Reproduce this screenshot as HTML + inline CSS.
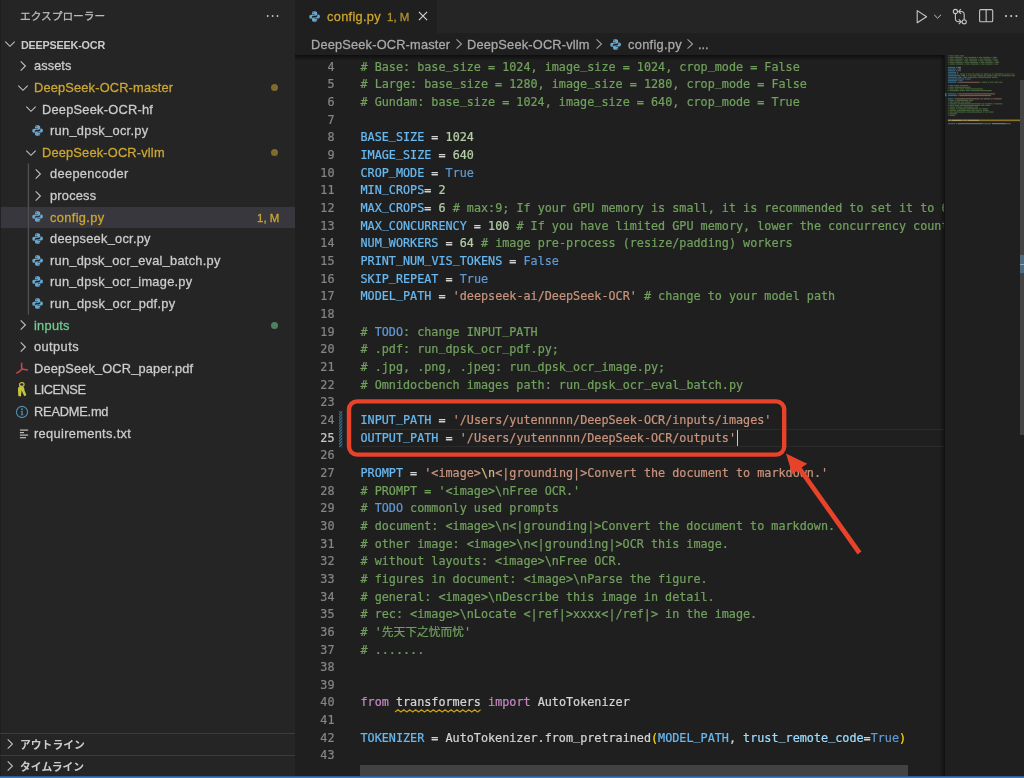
<!DOCTYPE html>
<html lang="ja">
<head>
<meta charset="utf-8">
<title>config.py — DeepSeek-OCR</title>
<style>
html,body{margin:0;padding:0;}
body{width:1024px;height:778px;overflow:hidden;background:#1f1f1f;position:relative;
 font-family:"Liberation Sans","Noto Sans CJK JP",sans-serif;color:#cccccc;}
div,span,svg{box-sizing:border-box;}
.abs{position:absolute;display:block;overflow:visible;}
#side{position:absolute;left:0;top:0;width:295px;height:776px;background:#252526;overflow:hidden;}
#editor{position:absolute;left:295px;top:0;width:729px;height:776px;background:#1f1f1f;overflow:hidden;}
#status{position:absolute;left:0;top:776px;width:1024px;height:2px;background:linear-gradient(#2e6097 0,#2e6097 1px,#3279c8 1px,#3279c8 2px);}
/* sidebar */
.title{position:absolute;left:20.3px;top:5.5px;height:21px;line-height:21px;font-size:10.7px;color:#bbbbbb;white-space:nowrap;}
.hdr{position:absolute;left:20.5px;top:33.5px;height:22px;line-height:22px;font-size:10.8px;font-weight:bold;color:#cccccc;white-space:nowrap;letter-spacing:-0.2px;}
.row,.badge,.title,#tab span,#bc span{-webkit-text-stroke:0.28px currentColor;}
.row,.badge,.title,.hdr,.pane span,#tab span,#bc span{will-change:transform;}
.cl,.ln{-webkit-text-stroke:0.22px currentColor;}
.row{position:absolute;height:21.6px;line-height:21.6px;font-size:12.8px;color:#cccccc;white-space:nowrap;}
.row.warn{color:#cca72f;}
.row.untr{color:#73c991;}
.selrow{position:absolute;left:0;width:295px;height:21.6px;background:#37373d;}
.dot{position:absolute;left:270.7px;width:7.4px;height:7.4px;border-radius:3.7px;}
.badge{position:absolute;right:16px;height:21.6px;line-height:21.6px;font-size:11.5px;color:#cca72f;white-space:nowrap;}
.guide{position:absolute;left:28px;top:163.35px;width:1px;height:151.2px;background:#585858;}
.pane{position:absolute;left:0;width:295px;height:22px;border-top:1px solid #3c3c3c;}
.pane span{position:absolute;left:20.3px;top:0.8px;height:21px;line-height:21px;font-size:10.8px;font-weight:bold;color:#cccccc;white-space:nowrap;}
/* editor */
#tabs{position:absolute;left:0;top:0;width:729px;height:33.4px;background:#252526;}
#tab{position:absolute;left:0;top:0;width:142px;height:33.4px;background:#1f1f1f;}
#tab .name{position:absolute;left:31.9px;top:1px;height:32.6px;line-height:32.6px;font-size:12.8px;color:#cca72f;white-space:nowrap;letter-spacing:0.31px;}
#tab .m{position:absolute;left:91.8px;top:1.4px;height:32.6px;line-height:32.6px;font-size:11.5px;color:#b3942e;white-space:nowrap;}
#bc{position:absolute;left:0;top:33.5px;width:729px;height:21.5px;background:#1f1f1f;font-size:12.8px;color:#a9a9a9;white-space:nowrap;}
#bc span{position:absolute;top:0;height:21.5px;line-height:21.5px;}
#shadow{position:absolute;left:0;top:55px;width:649px;height:5px;background:linear-gradient(rgba(0,0,0,.55),rgba(0,0,0,0));}
.ln{position:absolute;left:0;width:39.5px;text-align:right;height:17.67px;line-height:17.67px;font-family:"DejaVu Sans Mono","Liberation Mono",monospace;font-size:11.78px;color:#858585;white-space:pre;}
.ln.cur{color:#c6c6c6;}
.cl{position:absolute;left:65.5px;height:17.67px;line-height:17.67px;font-family:"DejaVu Sans Mono","Liberation Mono","Noto Sans CJK SC",monospace;font-size:11.78px;color:#d4d4d4;white-space:pre;}
.c{color:#71a05d;} .k{color:#68b9f2;} .n{color:#b5cea8;} .b{color:#6099d4;} .s{color:#c9937c;} .e{color:#d7ba7d;}
.i{color:#c586c0;} .g{color:#ffd700;} .d{color:#d4d4d4;} .p{color:#9cdcfe;}
.w{color:#d4d4d4;}
.u{position:relative;top:-2.1px;}
.u2{position:relative;top:-1px;}
#clip{position:absolute;left:0;top:55px;width:649px;height:721px;overflow:hidden;}
#clipin{will-change:transform;position:absolute;left:0;top:-55px;width:900px;height:776px;}
#curline{position:absolute;left:65px;top:428.9px;width:600px;height:17.7px;border-top:1.3px solid #2b2b2b;border-bottom:1.3px solid #2b2b2b;}
#cursor{position:absolute;left:442.2px;top:429.6px;width:1.3px;height:16.6px;background:#c8c8c8;}
#gut{position:absolute;left:43.7px;top:410.6px;width:3.4px;height:35.3px;background:repeating-linear-gradient(135deg,#2a87ad 0,#2a87ad 1.2px,#1f1f1f 1.2px,#1f1f1f 2.2px);}
#mini{position:absolute;left:649px;top:55px;width:80px;height:721px;background:#1f1f1f;}
#minishadow{position:absolute;left:645px;top:55px;width:5px;height:721px;background:linear-gradient(90deg,rgba(0,0,0,0),rgba(0,0,0,.45));}
#vslider{position:absolute;left:725px;top:80px;width:4px;height:355px;background:#434343;}
#vmark{position:absolute;left:725px;top:255.3px;width:4px;height:17.6px;background:#4d6b80;}
#vmark2{position:absolute;left:725px;top:263.6px;width:4px;height:1px;background:#9aa5ad;}
#hslider{position:absolute;left:65px;top:765.3px;width:548px;height:10.7px;background:#424242;}
</style>
</head>
<body>
<div id="side">
<div class="title">エクスプローラー</div>
<svg class="abs" style="left:265.9px;top:14.3px" width="14" height="4" viewBox="0 0 14 4" fill="#c5c5c5"><circle cx="1.7" cy="2" r="0.95"/><circle cx="6.6" cy="2" r="0.95"/><circle cx="11.5" cy="2" r="0.95"/></svg>
<svg class="abs" style="left:4px;top:38.3px" width="12" height="12" viewBox="0 0 12 12"><path d="M1.3 3.6 L6 8.3 L10.7 3.6" fill="none" stroke="#c0c0c0" stroke-width="1.1"/></svg>
<div class="hdr">DEEPSEEK-OCR</div>
<svg class="abs" style="left:16.70px;top:60.15px" width="12" height="12" viewBox="0 0 12 12"><path d="M3.7 1.3 L8.4 6 L3.7 10.7" fill="none" stroke="#c0c0c0" stroke-width="1.1"/></svg>
<div class="row " style="top:55.35px;left:34.00px;letter-spacing:0.083px">assets</div>
<svg class="abs" style="left:16.90px;top:81.85px" width="12" height="12" viewBox="0 0 12 12"><path d="M1.3 3.6 L6 8.3 L10.7 3.6" fill="none" stroke="#c0c0c0" stroke-width="1.1"/></svg>
<div class="row warn" style="top:76.95px;left:34.00px;letter-spacing:0.179px">DeepSeek-OCR-master</div>
<div class="dot" style="top:83.95px;background:#7f6c2b"></div>
<svg class="abs" style="left:24.75px;top:103.45px" width="12" height="12" viewBox="0 0 12 12"><path d="M1.3 3.6 L6 8.3 L10.7 3.6" fill="none" stroke="#c0c0c0" stroke-width="1.1"/></svg>
<div class="row " style="top:98.55px;left:41.85px;letter-spacing:0.247px">DeepSeek-OCR-hf</div>
<svg class="abs" style="left:32.00px;top:124.95px" width="11.2" height="11.2" viewBox="0 0 16 16" fill="#66a8cf"><path d="M7.86 0.5C6.1 0.5 4.3 1 4.3 2.75V4.6h3.8v0.6H2.75C1.2 5.2 0.4 6.5 0.4 8.05c0 1.6 0.8 2.95 2.2 2.95H4.1V9.1c0-1.3 1.1-2.4 2.4-2.4h3.3c1.1 0 1.9-0.9 1.9-2V2.75C11.7 1.2 9.9 0.5 7.86 0.5zM5.9 1.6c0.4 0 0.72 0.32 0.72 0.72S6.3 3.04 5.9 3.04 5.18 2.72 5.18 2.32 5.5 1.6 5.9 1.6z"/><path d="M8.14 15.5c1.76 0 3.56-0.5 3.56-2.25V11.4H7.9v-0.6h5.35c1.55 0 2.35-1.3 2.35-2.85 0-1.6-0.8-2.95-2.2-2.95H11.9v1.9c0 1.3-1.1 2.4-2.4 2.4H6.2c-1.1 0-1.9 0.9-1.9 2v1.95C4.3 14.8 6.1 15.5 8.14 15.5zM10.1 14.4c-0.4 0-0.72-0.32-0.72-0.72s0.32-0.72 0.72-0.72 0.72 0.32 0.72 0.72-0.32 0.72-0.72 0.72z"/></svg>
<div class="row " style="top:120.15px;left:49.70px;letter-spacing:0.3px">run<span class="u2">_</span>dpsk<span class="u2">_</span>ocr.py</div>
<svg class="abs" style="left:24.75px;top:146.65px" width="12" height="12" viewBox="0 0 12 12"><path d="M1.3 3.6 L6 8.3 L10.7 3.6" fill="none" stroke="#c0c0c0" stroke-width="1.1"/></svg>
<div class="row warn" style="top:141.75px;left:41.85px;letter-spacing:0.194px">DeepSeek-OCR-vllm</div>
<div class="dot" style="top:148.75px;background:#7f6c2b"></div>
<svg class="abs" style="left:32.40px;top:168.15px" width="12" height="12" viewBox="0 0 12 12"><path d="M3.7 1.3 L8.4 6 L3.7 10.7" fill="none" stroke="#c0c0c0" stroke-width="1.1"/></svg>
<div class="row " style="top:163.35px;left:49.70px;letter-spacing:0.345px">deepencoder</div>
<svg class="abs" style="left:32.40px;top:189.75px" width="12" height="12" viewBox="0 0 12 12"><path d="M3.7 1.3 L8.4 6 L3.7 10.7" fill="none" stroke="#c0c0c0" stroke-width="1.1"/></svg>
<div class="row " style="top:184.95px;left:49.70px;letter-spacing:0.214px">process</div>
<div class="selrow" style="top:206.55px"></div>
<svg class="abs" style="left:32.00px;top:211.35px" width="11.2" height="11.2" viewBox="0 0 16 16" fill="#66a8cf"><path d="M7.86 0.5C6.1 0.5 4.3 1 4.3 2.75V4.6h3.8v0.6H2.75C1.2 5.2 0.4 6.5 0.4 8.05c0 1.6 0.8 2.95 2.2 2.95H4.1V9.1c0-1.3 1.1-2.4 2.4-2.4h3.3c1.1 0 1.9-0.9 1.9-2V2.75C11.7 1.2 9.9 0.5 7.86 0.5zM5.9 1.6c0.4 0 0.72 0.32 0.72 0.72S6.3 3.04 5.9 3.04 5.18 2.72 5.18 2.32 5.5 1.6 5.9 1.6z"/><path d="M8.14 15.5c1.76 0 3.56-0.5 3.56-2.25V11.4H7.9v-0.6h5.35c1.55 0 2.35-1.3 2.35-2.85 0-1.6-0.8-2.95-2.2-2.95H11.9v1.9c0 1.3-1.1 2.4-2.4 2.4H6.2c-1.1 0-1.9 0.9-1.9 2v1.95C4.3 14.8 6.1 15.5 8.14 15.5zM10.1 14.4c-0.4 0-0.72-0.32-0.72-0.72s0.32-0.72 0.72-0.72 0.72 0.32 0.72 0.72-0.32 0.72-0.72 0.72z"/></svg>
<div class="row warn" style="top:206.55px;left:49.70px;letter-spacing:0.367px">config.py</div>
<div class="badge" style="top:207.55px">1, M</div>
<svg class="abs" style="left:32.00px;top:232.95px" width="11.2" height="11.2" viewBox="0 0 16 16" fill="#66a8cf"><path d="M7.86 0.5C6.1 0.5 4.3 1 4.3 2.75V4.6h3.8v0.6H2.75C1.2 5.2 0.4 6.5 0.4 8.05c0 1.6 0.8 2.95 2.2 2.95H4.1V9.1c0-1.3 1.1-2.4 2.4-2.4h3.3c1.1 0 1.9-0.9 1.9-2V2.75C11.7 1.2 9.9 0.5 7.86 0.5zM5.9 1.6c0.4 0 0.72 0.32 0.72 0.72S6.3 3.04 5.9 3.04 5.18 2.72 5.18 2.32 5.5 1.6 5.9 1.6z"/><path d="M8.14 15.5c1.76 0 3.56-0.5 3.56-2.25V11.4H7.9v-0.6h5.35c1.55 0 2.35-1.3 2.35-2.85 0-1.6-0.8-2.95-2.2-2.95H11.9v1.9c0 1.3-1.1 2.4-2.4 2.4H6.2c-1.1 0-1.9 0.9-1.9 2v1.95C4.3 14.8 6.1 15.5 8.14 15.5zM10.1 14.4c-0.4 0-0.72-0.32-0.72-0.72s0.32-0.72 0.72-0.72 0.72 0.32 0.72 0.72-0.32 0.72-0.72 0.72z"/></svg>
<div class="row " style="top:228.15px;left:49.70px;letter-spacing:0.267px">deepseek<span class="u2">_</span>ocr.py</div>
<svg class="abs" style="left:32.00px;top:254.55px" width="11.2" height="11.2" viewBox="0 0 16 16" fill="#66a8cf"><path d="M7.86 0.5C6.1 0.5 4.3 1 4.3 2.75V4.6h3.8v0.6H2.75C1.2 5.2 0.4 6.5 0.4 8.05c0 1.6 0.8 2.95 2.2 2.95H4.1V9.1c0-1.3 1.1-2.4 2.4-2.4h3.3c1.1 0 1.9-0.9 1.9-2V2.75C11.7 1.2 9.9 0.5 7.86 0.5zM5.9 1.6c0.4 0 0.72 0.32 0.72 0.72S6.3 3.04 5.9 3.04 5.18 2.72 5.18 2.32 5.5 1.6 5.9 1.6z"/><path d="M8.14 15.5c1.76 0 3.56-0.5 3.56-2.25V11.4H7.9v-0.6h5.35c1.55 0 2.35-1.3 2.35-2.85 0-1.6-0.8-2.95-2.2-2.95H11.9v1.9c0 1.3-1.1 2.4-2.4 2.4H6.2c-1.1 0-1.9 0.9-1.9 2v1.95C4.3 14.8 6.1 15.5 8.14 15.5zM10.1 14.4c-0.4 0-0.72-0.32-0.72-0.72s0.32-0.72 0.72-0.72 0.72 0.32 0.72 0.72-0.32 0.72-0.72 0.72z"/></svg>
<div class="row " style="top:249.75px;left:49.70px;letter-spacing:0.265px">run<span class="u2">_</span>dpsk<span class="u2">_</span>ocr<span class="u2">_</span>eval<span class="u2">_</span>batch.py</div>
<svg class="abs" style="left:32.00px;top:276.15px" width="11.2" height="11.2" viewBox="0 0 16 16" fill="#66a8cf"><path d="M7.86 0.5C6.1 0.5 4.3 1 4.3 2.75V4.6h3.8v0.6H2.75C1.2 5.2 0.4 6.5 0.4 8.05c0 1.6 0.8 2.95 2.2 2.95H4.1V9.1c0-1.3 1.1-2.4 2.4-2.4h3.3c1.1 0 1.9-0.9 1.9-2V2.75C11.7 1.2 9.9 0.5 7.86 0.5zM5.9 1.6c0.4 0 0.72 0.32 0.72 0.72S6.3 3.04 5.9 3.04 5.18 2.72 5.18 2.32 5.5 1.6 5.9 1.6z"/><path d="M8.14 15.5c1.76 0 3.56-0.5 3.56-2.25V11.4H7.9v-0.6h5.35c1.55 0 2.35-1.3 2.35-2.85 0-1.6-0.8-2.95-2.2-2.95H11.9v1.9c0 1.3-1.1 2.4-2.4 2.4H6.2c-1.1 0-1.9 0.9-1.9 2v1.95C4.3 14.8 6.1 15.5 8.14 15.5zM10.1 14.4c-0.4 0-0.72-0.32-0.72-0.72s0.32-0.72 0.72-0.72 0.72 0.32 0.72 0.72-0.32 0.72-0.72 0.72z"/></svg>
<div class="row " style="top:271.35px;left:49.70px;letter-spacing:0.276px">run<span class="u2">_</span>dpsk<span class="u2">_</span>ocr<span class="u2">_</span>image.py</div>
<svg class="abs" style="left:32.00px;top:297.75px" width="11.2" height="11.2" viewBox="0 0 16 16" fill="#66a8cf"><path d="M7.86 0.5C6.1 0.5 4.3 1 4.3 2.75V4.6h3.8v0.6H2.75C1.2 5.2 0.4 6.5 0.4 8.05c0 1.6 0.8 2.95 2.2 2.95H4.1V9.1c0-1.3 1.1-2.4 2.4-2.4h3.3c1.1 0 1.9-0.9 1.9-2V2.75C11.7 1.2 9.9 0.5 7.86 0.5zM5.9 1.6c0.4 0 0.72 0.32 0.72 0.72S6.3 3.04 5.9 3.04 5.18 2.72 5.18 2.32 5.5 1.6 5.9 1.6z"/><path d="M8.14 15.5c1.76 0 3.56-0.5 3.56-2.25V11.4H7.9v-0.6h5.35c1.55 0 2.35-1.3 2.35-2.85 0-1.6-0.8-2.95-2.2-2.95H11.9v1.9c0 1.3-1.1 2.4-2.4 2.4H6.2c-1.1 0-1.9 0.9-1.9 2v1.95C4.3 14.8 6.1 15.5 8.14 15.5zM10.1 14.4c-0.4 0-0.72-0.32-0.72-0.72s0.32-0.72 0.72-0.72 0.72 0.32 0.72 0.72-0.32 0.72-0.72 0.72z"/></svg>
<div class="row " style="top:292.95px;left:49.70px;letter-spacing:0.311px">run<span class="u2">_</span>dpsk<span class="u2">_</span>ocr<span class="u2">_</span>pdf.py</div>
<svg class="abs" style="left:16.70px;top:319.35px" width="12" height="12" viewBox="0 0 12 12"><path d="M3.7 1.3 L8.4 6 L3.7 10.7" fill="none" stroke="#c0c0c0" stroke-width="1.1"/></svg>
<div class="row untr" style="top:314.55px;left:34.00px;letter-spacing:0.267px">inputs</div>
<div class="dot" style="top:321.65px;background:#527f62"></div>
<svg class="abs" style="left:16.70px;top:340.95px" width="12" height="12" viewBox="0 0 12 12"><path d="M3.7 1.3 L8.4 6 L3.7 10.7" fill="none" stroke="#c0c0c0" stroke-width="1.1"/></svg>
<div class="row " style="top:336.15px;left:34.00px;letter-spacing:0.429px">outputs</div>
<svg class="abs" style="left:14.80px;top:361.75px" width="14" height="14" viewBox="0 0 14 14"><path d="M6.7 1.3 C6.3 3.2 6.6 5.2 7 7 C5.6 8.6 3.7 10.1 1.9 10.9 M7 7 C8.7 7.3 10.6 7.7 12.3 8.0" fill="none" stroke="#c9454a" stroke-width="1.6" stroke-linecap="round"/></svg>
<div class="row " style="top:357.75px;left:34.00px;letter-spacing:0.15px">DeepSeek<span class="u2">_</span>OCR<span class="u2">_</span>paper.pdf</div>
<svg class="abs" style="left:16.70px;top:382.35px" width="10" height="15" viewBox="0 0 10 15"><ellipse cx="4.8" cy="2.5" rx="2.3" ry="1.9" fill="none" stroke="#c4c43e" stroke-width="1.15"/><path d="M3.4 3.4 C1.5 4.4 0.6 6.4 1.0 8.2 L1.3 14 L3.9 14.4 L4.5 9.4 C5.3 8 5.2 5.4 4.6 4.0 Z" fill="#c4c43e"/><path d="M5.3 4.0 C7.0 4.6 7.7 6.6 7.4 8.2 L9.4 13 L7.3 14.2 L5.2 9.8 C4.8 8 4.7 5.6 5.3 4.0 Z" fill="#c4c43e"/></svg>
<div class="row " style="top:379.35px;left:34.00px;letter-spacing:-0.471px">LICENSE</div>
<svg class="abs" style="left:14.85px;top:404.85px" width="14" height="14" viewBox="0 0 14 14"><circle cx="7" cy="7" r="5.6" fill="none" stroke="#4f8fb3" stroke-width="1.15"/><circle cx="7" cy="4.3" r="0.95" fill="#4f8fb3"/><path d="M5.8 6 H7.7 V9.4 H8.4 V10.2 H5.7 V9.4 H6.4 V6.8 H5.8 Z" fill="#4f8fb3"/></svg>
<div class="row " style="top:400.95px;left:34.00px;letter-spacing:-0.2px">README.md</div>
<svg class="abs" style="left:18.70px;top:428.55px" width="10" height="10" viewBox="0 0 10 10" fill="#bdbdbd"><rect x="0.9" y="0.5" width="8.3" height="1.2"/><rect x="0.9" y="3.0" width="4.1" height="1.2"/><rect x="0.9" y="5.5" width="8.3" height="1.2"/><rect x="0.9" y="8.1" width="6.1" height="1.2"/></svg>
<div class="row " style="top:422.55px;left:34.00px;letter-spacing:0.338px">requirements.txt</div>
<svg class="abs" style="left:0;top:0" width="40" height="776" viewBox="0 0 40 776"><rect x="27.7" y="163.4" width="1.4" height="151.2" fill="#4e4e4e"/><rect x="0" y="0" width="0.8" height="776" fill="#1d1d1e"/></svg>
<div class="pane" style="top:733.4px"><svg class="abs" style="left:4.1px;top:3.9px" width="12" height="12" viewBox="0 0 12 12"><path d="M3.7 1.3 L8.4 6 L3.7 10.7" fill="none" stroke="#c0c0c0" stroke-width="1.1"/></svg><span>アウトライン</span></div>
<div class="pane" style="top:754.8px"><svg class="abs" style="left:4.1px;top:3.9px" width="12" height="12" viewBox="0 0 12 12"><path d="M3.7 1.3 L8.4 6 L3.7 10.7" fill="none" stroke="#c0c0c0" stroke-width="1.1"/></svg><span>タイムライン</span></div>
</div>
<div id="editor">
<div id="tabs"><div id="tab"><svg class="abs" style="left:14.20px;top:10.70px" width="11.2" height="11.2" viewBox="0 0 16 16" fill="#66a8cf"><path d="M7.86 0.5C6.1 0.5 4.3 1 4.3 2.75V4.6h3.8v0.6H2.75C1.2 5.2 0.4 6.5 0.4 8.05c0 1.6 0.8 2.95 2.2 2.95H4.1V9.1c0-1.3 1.1-2.4 2.4-2.4h3.3c1.1 0 1.9-0.9 1.9-2V2.75C11.7 1.2 9.9 0.5 7.86 0.5zM5.9 1.6c0.4 0 0.72 0.32 0.72 0.72S6.3 3.04 5.9 3.04 5.18 2.72 5.18 2.32 5.5 1.6 5.9 1.6z"/><path d="M8.14 15.5c1.76 0 3.56-0.5 3.56-2.25V11.4H7.9v-0.6h5.35c1.55 0 2.35-1.3 2.35-2.85 0-1.6-0.8-2.95-2.2-2.95H11.9v1.9c0 1.3-1.1 2.4-2.4 2.4H6.2c-1.1 0-1.9 0.9-1.9 2v1.95C4.3 14.8 6.1 15.5 8.14 15.5zM10.1 14.4c-0.4 0-0.72-0.32-0.72-0.72s0.32-0.72 0.72-0.72 0.72 0.32 0.72 0.72-0.32 0.72-0.72 0.72z"/></svg><span class="name">config.py</span><span class="m">1, M</span>
<svg class="abs" style="left:123.1px;top:11.2px" width="10" height="10" viewBox="0 0 10 10"><path d="M0.9 0.9 L9.1 9.1 M9.1 0.9 L0.9 9.1" stroke="#d4d4d4" stroke-width="1.15" fill="none"/></svg>
</div>
<svg class="abs" style="left:620px;top:8px" width="104" height="18" viewBox="0 0 104 18" fill="none" stroke="#c5c5c5" stroke-width="1.1">
<path d="M2.2 2.6 L11.6 8.7 L2.2 14.8 Z" stroke-linejoin="round"/>
<path d="M19.2 6.8 L22.6 10.2 L26 6.8" stroke-width="1"/>
<circle cx="40.4" cy="3.5" r="2.1"/><circle cx="49.2" cy="13.8" r="2.1"/>
<path d="M40.4 5.6 V10.6 Q40.4 13.8 43.6 13.8 H46 M43.8 11.4 L46.2 13.8 L43.8 16.2"/>
<path d="M49.2 11.7 V6.8 Q49.2 3.5 46 3.5 H43.8 M46 1.1 L43.6 3.5 L46 5.9"/>
<rect x="64.6" y="1.6" width="13.1" height="12.2" rx="1.3"/><path d="M71.15 1.6 V13.8"/>
<g fill="#c5c5c5" stroke="none"><circle cx="91" cy="8.1" r="1.05"/><circle cx="96.2" cy="8.1" r="1.05"/><circle cx="101.4" cy="8.1" r="1.05"/></g>
</svg>
</div>
<div id="bc"><span style="left:16px;letter-spacing:0.179px">DeepSeek-OCR-master</span>
<svg class="abs" style="left:158.2px;top:4.6px" width="12" height="12" viewBox="0 0 12 12"><path d="M3.5 1.3 L8.5 6 L3.5 10.7" fill="none" stroke="#a0a0a0" stroke-width="1.05"/></svg>
<span style="left:172.2px;letter-spacing:0.19px">DeepSeek-OCR-vllm</span>
<svg class="abs" style="left:297.6px;top:4.6px" width="12" height="12" viewBox="0 0 12 12"><path d="M3.5 1.3 L8.5 6 L3.5 10.7" fill="none" stroke="#a0a0a0" stroke-width="1.05"/></svg>
<svg class="abs" style="left:314.60px;top:5.10px" width="11.2" height="11.2" viewBox="0 0 16 16" fill="#66a8cf"><path d="M7.86 0.5C6.1 0.5 4.3 1 4.3 2.75V4.6h3.8v0.6H2.75C1.2 5.2 0.4 6.5 0.4 8.05c0 1.6 0.8 2.95 2.2 2.95H4.1V9.1c0-1.3 1.1-2.4 2.4-2.4h3.3c1.1 0 1.9-0.9 1.9-2V2.75C11.7 1.2 9.9 0.5 7.86 0.5zM5.9 1.6c0.4 0 0.72 0.32 0.72 0.72S6.3 3.04 5.9 3.04 5.18 2.72 5.18 2.32 5.5 1.6 5.9 1.6z"/><path d="M8.14 15.5c1.76 0 3.56-0.5 3.56-2.25V11.4H7.9v-0.6h5.35c1.55 0 2.35-1.3 2.35-2.85 0-1.6-0.8-2.95-2.2-2.95H11.9v1.9c0 1.3-1.1 2.4-2.4 2.4H6.2c-1.1 0-1.9 0.9-1.9 2v1.95C4.3 14.8 6.1 15.5 8.14 15.5zM10.1 14.4c-0.4 0-0.72-0.32-0.72-0.72s0.32-0.72 0.72-0.72 0.72 0.32 0.72 0.72-0.32 0.72-0.72 0.72z"/></svg>
<span style="left:333px;letter-spacing:0.31px">config.py</span>
<svg class="abs" style="left:389.3px;top:4.6px" width="12" height="12" viewBox="0 0 12 12"><path d="M3.5 1.3 L8.5 6 L3.5 10.7" fill="none" stroke="#a0a0a0" stroke-width="1.05"/></svg>
<span style="left:403.3px">...</span></div>
<div id="clip"><div id="clipin">
<div id="curline"></div>
<svg class="abs" style="left:44.0px;top:410.7px" width="3.3" height="36.3" viewBox="0 0 3.3 36.3"><defs><pattern id="gp" width="2.1" height="2.1" patternUnits="userSpaceOnUse" patternTransform="rotate(-45)"><rect width="2.1" height="1.2" fill="#3179a3"/></pattern></defs><rect width="3.3" height="36.3" fill="url(#gp)"/></svg>
<div class="ln" style="top:58.80px">4</div>
<div class="cl" style="top:58.80px"><span class="c"># Base: base<span class="u">_</span>size = 1024, image<span class="u">_</span>size = 1024, crop<span class="u">_</span>mode = False</span></div>
<div class="ln" style="top:76.46px">5</div>
<div class="cl" style="top:76.46px"><span class="c"># Large: base<span class="u">_</span>size = 1280, image<span class="u">_</span>size = 1280, crop<span class="u">_</span>mode = False</span></div>
<div class="ln" style="top:94.12px">6</div>
<div class="cl" style="top:94.12px"><span class="c"># Gundam: base<span class="u">_</span>size = 1024, image<span class="u">_</span>size = 640, crop<span class="u">_</span>mode = True</span></div>
<div class="ln" style="top:111.77px">7</div>
<div class="ln" style="top:129.43px">8</div>
<div class="cl" style="top:129.43px"><span class="k">BASE<span class="u">_</span>SIZE</span><span class="d"> = </span><span class="n">1024</span></div>
<div class="ln" style="top:147.09px">9</div>
<div class="cl" style="top:147.09px"><span class="k">IMAGE<span class="u">_</span>SIZE</span><span class="d"> = </span><span class="n">640</span></div>
<div class="ln" style="top:164.75px">10</div>
<div class="cl" style="top:164.75px"><span class="k">CROP<span class="u">_</span>MODE</span><span class="d"> = </span><span class="b">True</span></div>
<div class="ln" style="top:182.41px">11</div>
<div class="cl" style="top:182.41px"><span class="k">MIN<span class="u">_</span>CROPS</span><span class="d">= </span><span class="n">2</span></div>
<div class="ln" style="top:200.06px">12</div>
<div class="cl" style="top:200.06px"><span class="k">MAX<span class="u">_</span>CROPS</span><span class="d">= </span><span class="n">6</span><span class="c"> # max:9; If your GPU memory is small, it is recommended to set it to 6.</span></div>
<div class="ln" style="top:217.72px">13</div>
<div class="cl" style="top:217.72px"><span class="k">MAX<span class="u">_</span>CONCURRENCY</span><span class="d"> = </span><span class="n">100</span><span class="c"> # If you have limited GPU memory, lower the concurrency count.</span></div>
<div class="ln" style="top:235.38px">14</div>
<div class="cl" style="top:235.38px"><span class="k">NUM<span class="u">_</span>WORKERS</span><span class="d"> = </span><span class="n">64</span><span class="c"> # image pre-process (resize/padding) workers</span></div>
<div class="ln" style="top:253.04px">15</div>
<div class="cl" style="top:253.04px"><span class="k">PRINT<span class="u">_</span>NUM<span class="u">_</span>VIS<span class="u">_</span>TOKENS</span><span class="d"> = </span><span class="b">False</span></div>
<div class="ln" style="top:270.70px">16</div>
<div class="cl" style="top:270.70px"><span class="k">SKIP<span class="u">_</span>REPEAT</span><span class="d"> = </span><span class="b">True</span></div>
<div class="ln" style="top:288.35px">17</div>
<div class="cl" style="top:288.35px"><span class="k">MODEL<span class="u">_</span>PATH</span><span class="d"> = </span><span class="s">'deepseek-ai/DeepSeek-OCR'</span><span class="c"> # change to your model path</span></div>
<div class="ln" style="top:306.01px">18</div>
<div class="ln" style="top:323.67px">19</div>
<div class="cl" style="top:323.67px"><span class="c"># </span><span class="b">TODO</span><span class="c">: change INPUT<span class="u">_</span>PATH</span></div>
<div class="ln" style="top:341.33px">20</div>
<div class="cl" style="top:341.33px"><span class="c"># .pdf: run<span class="u">_</span>dpsk<span class="u">_</span>ocr<span class="u">_</span>pdf.py;</span></div>
<div class="ln" style="top:358.99px">21</div>
<div class="cl" style="top:358.99px"><span class="c"># .jpg, .png, .jpeg: run<span class="u">_</span>dpsk<span class="u">_</span>ocr<span class="u">_</span>image.py;</span></div>
<div class="ln" style="top:376.64px">22</div>
<div class="cl" style="top:376.64px"><span class="c"># Omnidocbench images path: run<span class="u">_</span>dpsk<span class="u">_</span>ocr<span class="u">_</span>eval<span class="u">_</span>batch.py</span></div>
<div class="ln" style="top:394.30px">23</div>
<div class="ln" style="top:411.96px">24</div>
<div class="cl" style="top:411.96px"><span class="k">INPUT<span class="u">_</span>PATH</span><span class="d"> = </span><span class="s">'/Users/yutennnnn/DeepSeek-OCR/inputs/images'</span></div>
<div class="ln cur" style="top:429.62px">25</div>
<div class="cl" style="top:429.62px"><span class="k">OUTPUT<span class="u">_</span>PATH</span><span class="d"> = </span><span class="s">'/Users/yutennnnn/DeepSeek-OCR/outputs'</span></div>
<div class="ln" style="top:447.28px">26</div>
<div class="ln" style="top:464.93px">27</div>
<div class="cl" style="top:464.93px"><span class="k">PROMPT</span><span class="d"> = </span><span class="s">'&lt;image&gt;</span><span class="e">\n</span><span class="s">&lt;|grounding|&gt;Convert the document to markdown.'</span></div>
<div class="ln" style="top:482.59px">28</div>
<div class="cl" style="top:482.59px"><span class="c"># PROMPT = '&lt;image&gt;\nFree OCR.'</span></div>
<div class="ln" style="top:500.25px">29</div>
<div class="cl" style="top:500.25px"><span class="c"># </span><span class="b">TODO</span><span class="c"> commonly used prompts</span></div>
<div class="ln" style="top:517.91px">30</div>
<div class="cl" style="top:517.91px"><span class="c"># document: &lt;image&gt;\n&lt;|grounding|&gt;Convert the document to markdown.</span></div>
<div class="ln" style="top:535.57px">31</div>
<div class="cl" style="top:535.57px"><span class="c"># other image: &lt;image&gt;\n&lt;|grounding|&gt;OCR this image.</span></div>
<div class="ln" style="top:553.22px">32</div>
<div class="cl" style="top:553.22px"><span class="c"># without layouts: &lt;image&gt;\nFree OCR.</span></div>
<div class="ln" style="top:570.88px">33</div>
<div class="cl" style="top:570.88px"><span class="c"># figures in document: &lt;image&gt;\nParse the figure.</span></div>
<div class="ln" style="top:588.54px">34</div>
<div class="cl" style="top:588.54px"><span class="c"># general: &lt;image&gt;\nDescribe this image in detail.</span></div>
<div class="ln" style="top:606.20px">35</div>
<div class="cl" style="top:606.20px"><span class="c"># rec: &lt;image&gt;\nLocate &lt;|ref|&gt;xxxx&lt;|/ref|&gt; in the image.</span></div>
<div class="ln" style="top:623.86px">36</div>
<div class="cl" style="top:623.86px"><span class="c"># '先天下之忧而忧'</span></div>
<div class="ln" style="top:641.51px">37</div>
<div class="cl" style="top:641.51px"><span class="c"># .......</span></div>
<div class="ln" style="top:659.17px">38</div>
<div class="ln" style="top:676.83px">39</div>
<div class="ln" style="top:694.49px">40</div>
<div class="cl" style="top:694.49px"><span class="i">from</span><span class="d"> </span><span class="w">transformers</span><span class="d"> </span><span class="i">import</span><span class="d"> AutoTokenizer</span></div>
<div class="ln" style="top:712.15px">41</div>
<div class="ln" style="top:729.80px">42</div>
<div class="cl" style="top:729.80px"><span class="k">TOKENIZER</span><span class="d"> = AutoTokenizer.from<span class="u">_</span>pretrained</span><span class="g">(</span><span class="k">MODEL<span class="u">_</span>PATH</span><span class="d">, </span><span class="p">trust<span class="u">_</span>remote<span class="u">_</span>code</span><span class="d">=</span><span class="b">True</span><span class="g">)</span></div>
<div class="ln" style="top:747.46px">43</div>
<svg class="abs" style="left:99.9px;top:708.7px" width="86" height="4" viewBox="0 0 86 4"><path d="M0 3.05 L2.95 0.75 L5.90 3.05 L8.85 0.75 L11.80 3.05 L14.75 0.75 L17.70 3.05 L20.65 0.75 L23.60 3.05 L26.55 0.75 L29.50 3.05 L32.45 0.75 L35.40 3.05 L38.35 0.75 L41.30 3.05 L44.25 0.75 L47.20 3.05 L50.15 0.75 L53.10 3.05 L56.05 0.75 L59.00 3.05 L61.95 0.75 L64.90 3.05 L67.85 0.75 L70.80 3.05 L73.75 0.75 L76.70 3.05 L79.65 0.75 L82.60 3.05 L85.55 0.75" fill="none" stroke="#c9a31c" stroke-width="1.1" stroke-linejoin="round"/></svg>
<div id="cursor"></div>
</div></div>
<div id="shadow"></div>
<div id="mini"><svg class="abs" style="left:0;top:0" width="80" height="100" viewBox="0 0 80 100"><rect x="3.9" y="64.51" width="72.1" height="1.65" fill="#8a761f"/><rect x="1.1" y="38.04" width="1.3" height="3.31" fill="#1b81a8"/><rect x="3.90" y="0.25" width="0.81" height="1.15" fill="#6a9955" opacity="0.5"/><rect x="5.53" y="0.25" width="4.07" height="1.15" fill="#6a9955" opacity="0.5"/><rect x="10.41" y="0.25" width="4.88" height="1.15" fill="#6a9955" opacity="0.5"/><rect x="16.11" y="0.25" width="4.07" height="1.15" fill="#6a9955" opacity="0.5"/><rect x="3.90" y="1.90" width="0.81" height="1.15" fill="#6a9955" opacity="0.5"/><rect x="5.53" y="1.90" width="4.07" height="1.15" fill="#6a9955" opacity="0.5"/><rect x="10.41" y="1.90" width="7.33" height="1.15" fill="#6a9955" opacity="0.5"/><rect x="18.55" y="1.90" width="0.81" height="1.15" fill="#6a9955" opacity="0.5"/><rect x="20.18" y="1.90" width="3.26" height="1.15" fill="#6a9955" opacity="0.5"/><rect x="24.25" y="1.90" width="8.14" height="1.15" fill="#6a9955" opacity="0.5"/><rect x="33.20" y="1.90" width="0.81" height="1.15" fill="#6a9955" opacity="0.5"/><rect x="34.83" y="1.90" width="3.26" height="1.15" fill="#6a9955" opacity="0.5"/><rect x="38.90" y="1.90" width="7.33" height="1.15" fill="#6a9955" opacity="0.5"/><rect x="47.04" y="1.90" width="0.81" height="1.15" fill="#6a9955" opacity="0.5"/><rect x="48.67" y="1.90" width="4.07" height="1.15" fill="#6a9955" opacity="0.5"/><rect x="3.90" y="3.56" width="0.81" height="1.15" fill="#6a9955" opacity="0.5"/><rect x="5.53" y="3.56" width="4.88" height="1.15" fill="#6a9955" opacity="0.5"/><rect x="11.23" y="3.56" width="7.33" height="1.15" fill="#6a9955" opacity="0.5"/><rect x="19.37" y="3.56" width="0.81" height="1.15" fill="#6a9955" opacity="0.5"/><rect x="20.99" y="3.56" width="3.26" height="1.15" fill="#6a9955" opacity="0.5"/><rect x="25.06" y="3.56" width="8.14" height="1.15" fill="#6a9955" opacity="0.5"/><rect x="34.02" y="3.56" width="0.81" height="1.15" fill="#6a9955" opacity="0.5"/><rect x="35.65" y="3.56" width="3.26" height="1.15" fill="#6a9955" opacity="0.5"/><rect x="39.72" y="3.56" width="7.33" height="1.15" fill="#6a9955" opacity="0.5"/><rect x="47.86" y="3.56" width="0.81" height="1.15" fill="#6a9955" opacity="0.5"/><rect x="49.48" y="3.56" width="4.07" height="1.15" fill="#6a9955" opacity="0.5"/><rect x="3.90" y="5.21" width="0.81" height="1.15" fill="#6a9955" opacity="0.5"/><rect x="5.53" y="5.21" width="4.07" height="1.15" fill="#6a9955" opacity="0.5"/><rect x="10.41" y="5.21" width="7.33" height="1.15" fill="#6a9955" opacity="0.5"/><rect x="18.55" y="5.21" width="0.81" height="1.15" fill="#6a9955" opacity="0.5"/><rect x="20.18" y="5.21" width="4.07" height="1.15" fill="#6a9955" opacity="0.5"/><rect x="25.06" y="5.21" width="8.14" height="1.15" fill="#6a9955" opacity="0.5"/><rect x="34.02" y="5.21" width="0.81" height="1.15" fill="#6a9955" opacity="0.5"/><rect x="35.65" y="5.21" width="4.07" height="1.15" fill="#6a9955" opacity="0.5"/><rect x="40.53" y="5.21" width="7.33" height="1.15" fill="#6a9955" opacity="0.5"/><rect x="48.67" y="5.21" width="0.81" height="1.15" fill="#6a9955" opacity="0.5"/><rect x="50.30" y="5.21" width="4.07" height="1.15" fill="#6a9955" opacity="0.5"/><rect x="3.90" y="6.87" width="0.81" height="1.15" fill="#6a9955" opacity="0.5"/><rect x="5.53" y="6.87" width="4.88" height="1.15" fill="#6a9955" opacity="0.5"/><rect x="11.23" y="6.87" width="7.33" height="1.15" fill="#6a9955" opacity="0.5"/><rect x="19.37" y="6.87" width="0.81" height="1.15" fill="#6a9955" opacity="0.5"/><rect x="20.99" y="6.87" width="4.07" height="1.15" fill="#6a9955" opacity="0.5"/><rect x="25.88" y="6.87" width="8.14" height="1.15" fill="#6a9955" opacity="0.5"/><rect x="34.83" y="6.87" width="0.81" height="1.15" fill="#6a9955" opacity="0.5"/><rect x="36.46" y="6.87" width="4.07" height="1.15" fill="#6a9955" opacity="0.5"/><rect x="41.34" y="6.87" width="7.33" height="1.15" fill="#6a9955" opacity="0.5"/><rect x="49.48" y="6.87" width="0.81" height="1.15" fill="#6a9955" opacity="0.5"/><rect x="51.11" y="6.87" width="4.07" height="1.15" fill="#6a9955" opacity="0.5"/><rect x="3.90" y="8.52" width="0.81" height="1.15" fill="#6a9955" opacity="0.5"/><rect x="5.53" y="8.52" width="5.70" height="1.15" fill="#6a9955" opacity="0.5"/><rect x="12.04" y="8.52" width="7.33" height="1.15" fill="#6a9955" opacity="0.5"/><rect x="20.18" y="8.52" width="0.81" height="1.15" fill="#6a9955" opacity="0.5"/><rect x="21.81" y="8.52" width="4.07" height="1.15" fill="#6a9955" opacity="0.5"/><rect x="26.69" y="8.52" width="8.14" height="1.15" fill="#6a9955" opacity="0.5"/><rect x="35.65" y="8.52" width="0.81" height="1.15" fill="#6a9955" opacity="0.5"/><rect x="37.27" y="8.52" width="3.26" height="1.15" fill="#6a9955" opacity="0.5"/><rect x="41.34" y="8.52" width="7.33" height="1.15" fill="#6a9955" opacity="0.5"/><rect x="49.48" y="8.52" width="0.81" height="1.15" fill="#6a9955" opacity="0.5"/><rect x="51.11" y="8.52" width="3.26" height="1.15" fill="#6a9955" opacity="0.5"/><rect x="3.90" y="11.83" width="7.33" height="1.15" fill="#4fc1ff" opacity="0.42"/><rect x="12.04" y="11.83" width="0.81" height="1.15" fill="#d4d4d4" opacity="0.42"/><rect x="13.67" y="11.83" width="3.26" height="1.15" fill="#b5cea8" opacity="0.5"/><rect x="3.90" y="13.48" width="8.14" height="1.15" fill="#4fc1ff" opacity="0.42"/><rect x="12.85" y="13.48" width="0.81" height="1.15" fill="#d4d4d4" opacity="0.42"/><rect x="14.48" y="13.48" width="2.44" height="1.15" fill="#b5cea8" opacity="0.5"/><rect x="3.90" y="15.14" width="7.33" height="1.15" fill="#4fc1ff" opacity="0.42"/><rect x="12.04" y="15.14" width="0.81" height="1.15" fill="#d4d4d4" opacity="0.42"/><rect x="13.67" y="15.14" width="3.26" height="1.15" fill="#569cd6" opacity="0.5"/><rect x="3.90" y="16.79" width="7.33" height="1.15" fill="#4fc1ff" opacity="0.42"/><rect x="11.23" y="16.79" width="0.81" height="1.15" fill="#d4d4d4" opacity="0.42"/><rect x="12.85" y="16.79" width="0.81" height="1.15" fill="#b5cea8" opacity="0.5"/><rect x="3.90" y="18.44" width="7.33" height="1.15" fill="#4fc1ff" opacity="0.42"/><rect x="11.23" y="18.44" width="0.81" height="1.15" fill="#d4d4d4" opacity="0.42"/><rect x="12.85" y="18.44" width="0.81" height="1.15" fill="#b5cea8" opacity="0.5"/><rect x="14.48" y="18.44" width="0.81" height="1.15" fill="#6a9955" opacity="0.5"/><rect x="16.11" y="18.44" width="4.88" height="1.15" fill="#6a9955" opacity="0.5"/><rect x="21.81" y="18.44" width="1.63" height="1.15" fill="#6a9955" opacity="0.5"/><rect x="24.25" y="18.44" width="3.26" height="1.15" fill="#6a9955" opacity="0.5"/><rect x="28.32" y="18.44" width="2.44" height="1.15" fill="#6a9955" opacity="0.5"/><rect x="31.58" y="18.44" width="4.88" height="1.15" fill="#6a9955" opacity="0.5"/><rect x="37.27" y="18.44" width="1.63" height="1.15" fill="#6a9955" opacity="0.5"/><rect x="39.72" y="18.44" width="4.88" height="1.15" fill="#6a9955" opacity="0.5"/><rect x="45.41" y="18.44" width="1.63" height="1.15" fill="#6a9955" opacity="0.5"/><rect x="47.86" y="18.44" width="1.63" height="1.15" fill="#6a9955" opacity="0.5"/><rect x="50.30" y="18.44" width="8.95" height="1.15" fill="#6a9955" opacity="0.5"/><rect x="60.07" y="18.44" width="1.63" height="1.15" fill="#6a9955" opacity="0.5"/><rect x="62.51" y="18.44" width="2.44" height="1.15" fill="#6a9955" opacity="0.5"/><rect x="65.76" y="18.44" width="1.63" height="1.15" fill="#6a9955" opacity="0.5"/><rect x="68.21" y="18.44" width="1.63" height="1.15" fill="#6a9955" opacity="0.5"/><rect x="70.65" y="18.44" width="0.35" height="1.15" fill="#6a9955" opacity="0.5"/><rect x="3.90" y="20.10" width="12.21" height="1.15" fill="#4fc1ff" opacity="0.42"/><rect x="16.92" y="20.10" width="0.81" height="1.15" fill="#d4d4d4" opacity="0.42"/><rect x="18.55" y="20.10" width="2.44" height="1.15" fill="#b5cea8" opacity="0.5"/><rect x="21.81" y="20.10" width="0.81" height="1.15" fill="#6a9955" opacity="0.5"/><rect x="23.44" y="20.10" width="1.63" height="1.15" fill="#6a9955" opacity="0.5"/><rect x="25.88" y="20.10" width="2.44" height="1.15" fill="#6a9955" opacity="0.5"/><rect x="29.13" y="20.10" width="3.26" height="1.15" fill="#6a9955" opacity="0.5"/><rect x="33.20" y="20.10" width="5.70" height="1.15" fill="#6a9955" opacity="0.5"/><rect x="39.72" y="20.10" width="2.44" height="1.15" fill="#6a9955" opacity="0.5"/><rect x="42.97" y="20.10" width="5.70" height="1.15" fill="#6a9955" opacity="0.5"/><rect x="49.48" y="20.10" width="4.07" height="1.15" fill="#6a9955" opacity="0.5"/><rect x="54.37" y="20.10" width="2.44" height="1.15" fill="#6a9955" opacity="0.5"/><rect x="57.62" y="20.10" width="8.95" height="1.15" fill="#6a9955" opacity="0.5"/><rect x="67.39" y="20.10" width="3.61" height="1.15" fill="#6a9955" opacity="0.5"/><rect x="3.90" y="21.75" width="8.95" height="1.15" fill="#4fc1ff" opacity="0.42"/><rect x="13.67" y="21.75" width="0.81" height="1.15" fill="#d4d4d4" opacity="0.42"/><rect x="15.30" y="21.75" width="1.63" height="1.15" fill="#b5cea8" opacity="0.5"/><rect x="17.74" y="21.75" width="0.81" height="1.15" fill="#6a9955" opacity="0.5"/><rect x="19.37" y="21.75" width="4.07" height="1.15" fill="#6a9955" opacity="0.5"/><rect x="24.25" y="21.75" width="8.95" height="1.15" fill="#6a9955" opacity="0.5"/><rect x="34.02" y="21.75" width="13.02" height="1.15" fill="#6a9955" opacity="0.5"/><rect x="47.86" y="21.75" width="5.70" height="1.15" fill="#6a9955" opacity="0.5"/><rect x="3.90" y="23.41" width="16.28" height="1.15" fill="#4fc1ff" opacity="0.42"/><rect x="20.99" y="23.41" width="0.81" height="1.15" fill="#d4d4d4" opacity="0.42"/><rect x="22.62" y="23.41" width="4.07" height="1.15" fill="#569cd6" opacity="0.5"/><rect x="3.90" y="25.06" width="8.95" height="1.15" fill="#4fc1ff" opacity="0.42"/><rect x="13.67" y="25.06" width="0.81" height="1.15" fill="#d4d4d4" opacity="0.42"/><rect x="15.30" y="25.06" width="3.26" height="1.15" fill="#569cd6" opacity="0.5"/><rect x="3.90" y="26.71" width="8.14" height="1.15" fill="#4fc1ff" opacity="0.42"/><rect x="12.85" y="26.71" width="0.81" height="1.15" fill="#d4d4d4" opacity="0.42"/><rect x="14.48" y="26.71" width="21.16" height="1.15" fill="#ce9178" opacity="0.5"/><rect x="36.46" y="26.71" width="0.81" height="1.15" fill="#6a9955" opacity="0.5"/><rect x="38.09" y="26.71" width="4.88" height="1.15" fill="#6a9955" opacity="0.5"/><rect x="43.79" y="26.71" width="1.63" height="1.15" fill="#6a9955" opacity="0.5"/><rect x="46.23" y="26.71" width="3.26" height="1.15" fill="#6a9955" opacity="0.5"/><rect x="50.30" y="26.71" width="4.07" height="1.15" fill="#6a9955" opacity="0.5"/><rect x="55.18" y="26.71" width="3.26" height="1.15" fill="#6a9955" opacity="0.5"/><rect x="3.90" y="30.02" width="0.81" height="1.15" fill="#6a9955" opacity="0.5"/><rect x="5.53" y="30.02" width="3.26" height="1.15" fill="#569cd6" opacity="0.5"/><rect x="8.78" y="30.02" width="0.81" height="1.15" fill="#6a9955" opacity="0.5"/><rect x="10.41" y="30.02" width="4.88" height="1.15" fill="#6a9955" opacity="0.5"/><rect x="16.11" y="30.02" width="8.14" height="1.15" fill="#6a9955" opacity="0.5"/><rect x="3.90" y="31.68" width="0.81" height="1.15" fill="#6a9955" opacity="0.5"/><rect x="5.53" y="31.68" width="4.07" height="1.15" fill="#6a9955" opacity="0.5"/><rect x="10.41" y="31.68" width="16.28" height="1.15" fill="#6a9955" opacity="0.5"/><rect x="3.90" y="33.33" width="0.81" height="1.15" fill="#6a9955" opacity="0.5"/><rect x="5.53" y="33.33" width="4.07" height="1.15" fill="#6a9955" opacity="0.5"/><rect x="10.41" y="33.33" width="4.07" height="1.15" fill="#6a9955" opacity="0.5"/><rect x="15.30" y="33.33" width="4.88" height="1.15" fill="#6a9955" opacity="0.5"/><rect x="20.99" y="33.33" width="17.91" height="1.15" fill="#6a9955" opacity="0.5"/><rect x="3.90" y="34.98" width="0.81" height="1.15" fill="#6a9955" opacity="0.5"/><rect x="5.53" y="34.98" width="9.77" height="1.15" fill="#6a9955" opacity="0.5"/><rect x="16.11" y="34.98" width="4.88" height="1.15" fill="#6a9955" opacity="0.5"/><rect x="21.81" y="34.98" width="4.07" height="1.15" fill="#6a9955" opacity="0.5"/><rect x="26.69" y="34.98" width="21.16" height="1.15" fill="#6a9955" opacity="0.5"/><rect x="3.90" y="38.29" width="8.14" height="1.15" fill="#4fc1ff" opacity="0.42"/><rect x="12.85" y="38.29" width="0.81" height="1.15" fill="#d4d4d4" opacity="0.42"/><rect x="14.48" y="38.29" width="36.63" height="1.15" fill="#ce9178" opacity="0.5"/><rect x="3.90" y="39.95" width="8.95" height="1.15" fill="#4fc1ff" opacity="0.42"/><rect x="13.67" y="39.95" width="0.81" height="1.15" fill="#d4d4d4" opacity="0.42"/><rect x="15.30" y="39.95" width="31.75" height="1.15" fill="#ce9178" opacity="0.5"/><rect x="3.90" y="43.25" width="4.88" height="1.15" fill="#4fc1ff" opacity="0.42"/><rect x="9.60" y="43.25" width="0.81" height="1.15" fill="#d4d4d4" opacity="0.42"/><rect x="11.23" y="43.25" width="6.51" height="1.15" fill="#ce9178" opacity="0.5"/><rect x="17.74" y="43.25" width="1.63" height="1.15" fill="#d7ba7d" opacity="0.5"/><rect x="19.37" y="43.25" width="16.28" height="1.15" fill="#ce9178" opacity="0.5"/><rect x="36.46" y="43.25" width="2.44" height="1.15" fill="#ce9178" opacity="0.5"/><rect x="39.72" y="43.25" width="6.51" height="1.15" fill="#ce9178" opacity="0.5"/><rect x="47.04" y="43.25" width="1.63" height="1.15" fill="#ce9178" opacity="0.5"/><rect x="49.48" y="43.25" width="8.14" height="1.15" fill="#ce9178" opacity="0.5"/><rect x="3.90" y="44.91" width="0.81" height="1.15" fill="#6a9955" opacity="0.5"/><rect x="5.53" y="44.91" width="4.88" height="1.15" fill="#6a9955" opacity="0.5"/><rect x="11.23" y="44.91" width="0.81" height="1.15" fill="#6a9955" opacity="0.5"/><rect x="12.85" y="44.91" width="11.40" height="1.15" fill="#6a9955" opacity="0.5"/><rect x="25.06" y="44.91" width="4.07" height="1.15" fill="#6a9955" opacity="0.5"/><rect x="3.90" y="46.56" width="0.81" height="1.15" fill="#6a9955" opacity="0.5"/><rect x="5.53" y="46.56" width="3.26" height="1.15" fill="#569cd6" opacity="0.5"/><rect x="9.60" y="46.56" width="6.51" height="1.15" fill="#6a9955" opacity="0.5"/><rect x="16.92" y="46.56" width="3.26" height="1.15" fill="#6a9955" opacity="0.5"/><rect x="20.99" y="46.56" width="5.70" height="1.15" fill="#6a9955" opacity="0.5"/><rect x="3.90" y="48.22" width="0.81" height="1.15" fill="#6a9955" opacity="0.5"/><rect x="5.53" y="48.22" width="7.33" height="1.15" fill="#6a9955" opacity="0.5"/><rect x="13.67" y="48.22" width="23.61" height="1.15" fill="#6a9955" opacity="0.5"/><rect x="38.09" y="48.22" width="2.44" height="1.15" fill="#6a9955" opacity="0.5"/><rect x="41.34" y="48.22" width="6.51" height="1.15" fill="#6a9955" opacity="0.5"/><rect x="48.67" y="48.22" width="1.63" height="1.15" fill="#6a9955" opacity="0.5"/><rect x="51.11" y="48.22" width="7.33" height="1.15" fill="#6a9955" opacity="0.5"/><rect x="3.90" y="49.87" width="0.81" height="1.15" fill="#6a9955" opacity="0.5"/><rect x="5.53" y="49.87" width="4.07" height="1.15" fill="#6a9955" opacity="0.5"/><rect x="10.41" y="49.87" width="4.88" height="1.15" fill="#6a9955" opacity="0.5"/><rect x="16.11" y="49.87" width="20.35" height="1.15" fill="#6a9955" opacity="0.5"/><rect x="37.27" y="49.87" width="3.26" height="1.15" fill="#6a9955" opacity="0.5"/><rect x="41.34" y="49.87" width="4.88" height="1.15" fill="#6a9955" opacity="0.5"/><rect x="3.90" y="51.52" width="0.81" height="1.15" fill="#6a9955" opacity="0.5"/><rect x="5.53" y="51.52" width="5.70" height="1.15" fill="#6a9955" opacity="0.5"/><rect x="12.04" y="51.52" width="6.51" height="1.15" fill="#6a9955" opacity="0.5"/><rect x="19.37" y="51.52" width="10.58" height="1.15" fill="#6a9955" opacity="0.5"/><rect x="30.76" y="51.52" width="3.26" height="1.15" fill="#6a9955" opacity="0.5"/><rect x="3.90" y="53.18" width="0.81" height="1.15" fill="#6a9955" opacity="0.5"/><rect x="5.53" y="53.18" width="5.70" height="1.15" fill="#6a9955" opacity="0.5"/><rect x="12.04" y="53.18" width="1.63" height="1.15" fill="#6a9955" opacity="0.5"/><rect x="14.48" y="53.18" width="7.33" height="1.15" fill="#6a9955" opacity="0.5"/><rect x="22.62" y="53.18" width="11.40" height="1.15" fill="#6a9955" opacity="0.5"/><rect x="34.83" y="53.18" width="2.44" height="1.15" fill="#6a9955" opacity="0.5"/><rect x="38.09" y="53.18" width="5.70" height="1.15" fill="#6a9955" opacity="0.5"/><rect x="3.90" y="54.83" width="0.81" height="1.15" fill="#6a9955" opacity="0.5"/><rect x="5.53" y="54.83" width="6.51" height="1.15" fill="#6a9955" opacity="0.5"/><rect x="12.85" y="54.83" width="13.84" height="1.15" fill="#6a9955" opacity="0.5"/><rect x="27.51" y="54.83" width="3.26" height="1.15" fill="#6a9955" opacity="0.5"/><rect x="31.58" y="54.83" width="4.07" height="1.15" fill="#6a9955" opacity="0.5"/><rect x="36.46" y="54.83" width="1.63" height="1.15" fill="#6a9955" opacity="0.5"/><rect x="38.90" y="54.83" width="5.70" height="1.15" fill="#6a9955" opacity="0.5"/><rect x="3.90" y="56.49" width="0.81" height="1.15" fill="#6a9955" opacity="0.5"/><rect x="5.53" y="56.49" width="3.26" height="1.15" fill="#6a9955" opacity="0.5"/><rect x="9.60" y="56.49" width="12.21" height="1.15" fill="#6a9955" opacity="0.5"/><rect x="22.62" y="56.49" width="15.47" height="1.15" fill="#6a9955" opacity="0.5"/><rect x="38.90" y="56.49" width="1.63" height="1.15" fill="#6a9955" opacity="0.5"/><rect x="41.34" y="56.49" width="2.44" height="1.15" fill="#6a9955" opacity="0.5"/><rect x="44.60" y="56.49" width="4.88" height="1.15" fill="#6a9955" opacity="0.5"/><rect x="3.90" y="58.14" width="0.81" height="1.15" fill="#6a9955" opacity="0.5"/><rect x="5.53" y="58.14" width="7.33" height="1.15" fill="#6a9955" opacity="0.5"/><rect x="3.90" y="59.79" width="0.81" height="1.15" fill="#6a9955" opacity="0.5"/><rect x="5.53" y="59.79" width="5.70" height="1.15" fill="#6a9955" opacity="0.5"/><rect x="3.90" y="64.76" width="3.26" height="1.15" fill="#c586c0" opacity="0.5"/><rect x="7.97" y="64.76" width="9.77" height="1.15" fill="#d4d4d4" opacity="0.42"/><rect x="18.55" y="64.76" width="4.88" height="1.15" fill="#c586c0" opacity="0.5"/><rect x="24.25" y="64.76" width="10.58" height="1.15" fill="#d4d4d4" opacity="0.42"/><rect x="3.90" y="68.06" width="7.33" height="1.15" fill="#4fc1ff" opacity="0.42"/><rect x="12.04" y="68.06" width="0.81" height="1.15" fill="#d4d4d4" opacity="0.42"/><rect x="13.67" y="68.06" width="23.61" height="1.15" fill="#d4d4d4" opacity="0.42"/><rect x="37.27" y="68.06" width="0.81" height="1.15" fill="#ffd700" opacity="0.5"/><rect x="38.09" y="68.06" width="8.14" height="1.15" fill="#4fc1ff" opacity="0.42"/><rect x="46.23" y="68.06" width="0.81" height="1.15" fill="#d4d4d4" opacity="0.42"/><rect x="47.86" y="68.06" width="13.84" height="1.15" fill="#9cdcfe" opacity="0.5"/><rect x="61.69" y="68.06" width="0.81" height="1.15" fill="#d4d4d4" opacity="0.42"/><rect x="62.51" y="68.06" width="3.26" height="1.15" fill="#569cd6" opacity="0.5"/><rect x="65.76" y="68.06" width="0.81" height="1.15" fill="#ffd700" opacity="0.5"/></svg></div>
<div id="minishadow"></div>
<div id="vslider"></div><div id="vmark"></div><div id="vmark2"></div>
<div id="hslider"></div>
<svg class="abs" style="left:0;top:0" width="729" height="776" viewBox="295 0 729 776">
<rect x="349.0" y="401.4" width="435.2" height="53.2" rx="8" ry="8" fill="none" stroke="#e8432a" stroke-width="4.4"/>
<path d="M786 453.6 L807.3 463.8 L801.6 467.5 L861.4 551.6 L857.6 554.4 L797.9 470.3 L792.2 474 Z" fill="#e8432a"/>
</svg>
</div>
<div id="status"></div>
</body>
</html>
